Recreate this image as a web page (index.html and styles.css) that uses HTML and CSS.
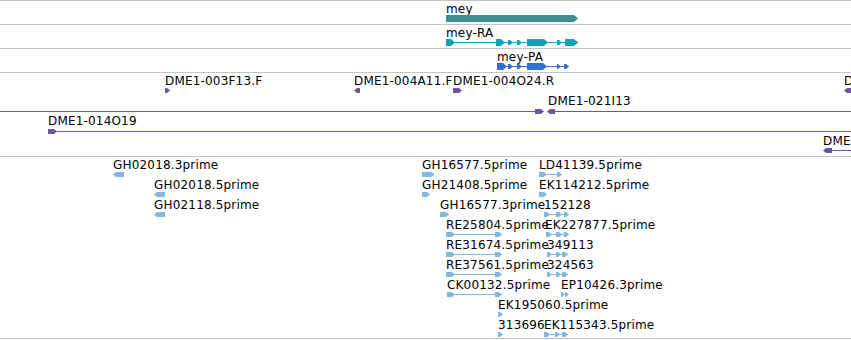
FILE: index.html
```html
<!DOCTYPE html>
<html>
<head>
<meta charset="utf-8">
<link rel="stylesheet" href="styles.css">
</head>
<body>
<div class="browser">
  <div class="track t1">
    <svg class="canvas" width="851" height="23" viewBox="0 1 851 23">
      <text class="lbl" x="446" y="13">mey</text>
      <polygon class="gene" points="446,15 574,15 578,18.5 574,22 446,22"/>
    </svg>
  </div>
  <div class="track t2">
    <svg class="canvas" width="851" height="23" viewBox="0 25 851 23">
      <text class="lbl" x="446" y="37">mey-RA</text>
      <g class="ra">
        <rect x="446" y="42" width="132" height="1"/>
        <polygon points="446,39 451,39 455,42.5 451,46 446,46"/>
        <polygon points="496,39 501,39 505,42.5 501,46 496,46"/>
        <polygon points="508,40 510,40 513,42.5 510,45 508,45"/>
        <polygon points="517,40 519,40 522,42.5 519,45 517,45"/>
        <polygon points="527,39 544,39 548,42.5 544,46 527,46"/>
        <polygon points="557,40 559,40 562,42.5 559,45 557,45"/>
        <polygon points="565,39 574,39 578,42.5 574,46 565,46"/>
      </g>
    </svg>
  </div>
  <div class="track t3">
    <svg class="canvas" width="851" height="23" viewBox="0 49 851 23">
      <text class="lbl" x="497" y="61">mey-PA</text>
      <g class="pa">
        <rect x="497" y="66" width="72" height="1"/>
        <polygon points="497,63 503,63 507,66.5 503,70 497,70"/>
        <polygon points="508,64 510,64 513,66.5 510,69 508,69"/>
        <polygon points="517,64 519,64 522,66.5 519,69 517,69"/>
        <polygon points="527,63 543,63 547,66.5 543,70 527,70"/>
        <polygon points="557,64 558,64 561,66.5 558,69 557,69"/>
        <polygon points="564,64 566,64 569,66.5 566,69 564,69"/>
      </g>
    </svg>
  </div>
  <div class="track t4">
    <svg class="canvas" width="851" height="83" viewBox="0 73 851 83">
      <text class="lbl" x="165" y="85">DME1-003F13.F</text>
      <text class="lbl" x="354" y="85">DME1-004A11.F</text>
      <text class="lbl" x="453" y="85">DME1-004O24.R</text>
      <text class="lbl" x="844" y="85">D</text>
      <text class="lbl" x="548" y="105">DME1-021I13</text>
      <text class="lbl" x="48" y="125">DME1-014O19</text>
      <text class="lbl" x="823" y="145">DME</text>
      <g class="clone">
        <polygon points="165,88 167,88 170,90.5 167,93 165,93"/>
        <polygon points="354,90.5 357,88 360,88 360,93 357,93"/>
        <polygon points="453,88 459,88 462,90.5 459,93 453,93"/>
        <polygon points="844,90.5 847,88 851,88 851,93 847,93"/>

        <rect x="0" y="111" width="535" height="1"/>
        <polygon points="535,109 541,109 544,111.5 541,114 535,114"/>
        <polygon points="547,111.5 550,109 555,109 555,114 550,114"/>
        <rect x="555" y="111" width="296" height="1"/>

        <polygon points="48,129 54,129 57,131.5 54,134 48,134"/>
        <rect x="57" y="131" width="794" height="1"/>

        <polygon points="823,150.5 826,148 832,148 832,153 826,153"/>
        <rect x="832" y="150" width="19" height="1"/>
      </g>
    </svg>
  </div>
  <div class="track t5">
    <svg class="canvas" width="851" height="181" viewBox="0 157 851 181">
      <text class="lbl" x="113" y="169">GH02018.3prime</text>
      <text class="lbl" x="422" y="169">GH16577.5prime</text>
      <text class="lbl" x="539" y="169">LD41139.5prime</text>

      <text class="lbl" x="154" y="189">GH02018.5prime</text>
      <text class="lbl" x="422" y="189">GH21408.5prime</text>
      <text class="lbl" x="539" y="189">EK114212.5prime</text>

      <text class="lbl" x="154" y="209">GH02118.5prime</text>
      <text class="lbl" x="440" y="209">GH16577.3prime</text>
      <text class="lbl" x="544" y="209">152128</text>

      <text class="lbl" x="446" y="229">RE25804.5prime</text>
      <text class="lbl" x="545" y="229">EK227877.5prime</text>

      <text class="lbl" x="446" y="249">RE31674.5prime</text>
      <text class="lbl" x="547" y="249">349113</text>

      <text class="lbl" x="446" y="269">RE37561.5prime</text>
      <text class="lbl" x="547" y="269">324563</text>

      <text class="lbl" x="447" y="289">CK00132.5prime</text>
      <text class="lbl" x="561" y="289">EP10426.3prime</text>

      <text class="lbl" x="498" y="309">EK195060.5prime</text>

      <text class="lbl" x="498" y="329">313696</text>
      <text class="lbl" x="544" y="329">EK115343.5prime</text>

      <g class="est">
        <!-- row 1 -->
        <polygon points="113,174.5 116,172 124,172 124,177 116,177"/>
        <polygon points="422,172 431,172 435,174.5 431,177 422,177"/>
        <polygon points="539,172 544,172 547,174.5 544,177 539,177"/>
        <rect x="547" y="174" width="10" height="1"/>
        <polygon points="557,172 559,172 562,174.5 559,177 557,177"/>
        <!-- row 2 -->
        <polygon points="154,194.5 157,192 165,192 165,197 157,197"/>
        <polygon points="422,192 427,192 430,194.5 427,197 422,197"/>
        <polygon points="539,192 544,192 547,194.5 544,197 539,197"/>
        <!-- row 3 -->
        <polygon points="154,214.5 157,212 165,212 165,217 157,217"/>
        <polygon points="440,212 446,212 449,214.5 446,217 440,217"/>
        <rect x="544" y="214" width="25" height="1"/>
        <polygon points="544,212 547,212 550,214.5 547,217 544,217"/>
        <polygon points="556,212 559,212 562,214.5 559,217 556,217"/>
        <polygon points="564,212 566,212 569,214.5 566,217 564,217"/>
        <!-- row 4 -->
        <rect x="446" y="234" width="56" height="1"/>
        <polygon points="446,232 452,232 455,234.5 452,237 446,237"/>
        <polygon points="495,232 499,232 502,234.5 499,237 495,237"/>
        <rect x="546" y="234" width="23" height="1"/>
        <polygon points="546,232 549,232 552,234.5 549,237 546,237"/>
        <polygon points="556,232 559,232 562,234.5 559,237 556,237"/>
        <polygon points="564,232 566,232 569,234.5 566,237 564,237"/>
        <!-- row 5 -->
        <rect x="446" y="254" width="56" height="1"/>
        <polygon points="446,252 452,252 455,254.5 452,257 446,257"/>
        <polygon points="495,252 499,252 502,254.5 499,257 495,257"/>
        <rect x="547" y="254" width="21" height="1"/>
        <polygon points="547,252 549,252 552,254.5 549,257 547,257"/>
        <polygon points="556,252 558,252 561,254.5 558,257 556,257"/>
        <polygon points="562,252 565,252 568,254.5 565,257 562,257"/>
        <!-- row 6 -->
        <rect x="446" y="274" width="56" height="1"/>
        <polygon points="446,272 452,272 455,274.5 452,277 446,277"/>
        <polygon points="495,272 499,272 502,274.5 499,277 495,277"/>
        <rect x="547" y="274" width="21" height="1"/>
        <polygon points="547,272 549,272 552,274.5 549,277 547,277"/>
        <polygon points="556,272 558,272 561,274.5 558,277 556,277"/>
        <polygon points="562,272 565,272 568,274.5 565,277 562,277"/>
        <!-- row 7 -->
        <rect x="447" y="294" width="55" height="1"/>
        <polygon points="447,292 452,292 455,294.5 452,297 447,297"/>
        <polygon points="495,292 499,292 502,294.5 499,297 495,297"/>
        <polygon points="561,292 562,292 565,294.5 562,297 561,297"/>
        <polygon points="565,292 566,292 569,294.5 566,297 565,297"/>
        <!-- row 8 -->
        <polygon points="498,312 500,312 503,314.5 500,317 498,317"/>
        <!-- row 9 -->
        <polygon points="498,332 500,332 503,334.5 500,337 498,337"/>
        <rect x="544" y="334" width="24" height="1"/>
        <polygon points="544,332 547,332 550,334.5 547,337 544,337"/>
        <polygon points="555,332 557,332 560,334.5 557,337 555,337"/>
        <polygon points="562,332 565,332 568,334.5 565,337 562,337"/>
      </g>
    </svg>
  </div>
</div>
</body>
</html>
```

FILE: styles.css
```css
html, body {
  margin: 0;
  padding: 0;
  background: #ffffff;
}

.browser {
  width: 851px;
  height: 340px;
  overflow: hidden;
  border-top: 1px solid #c4c4c4;
  box-sizing: border-box;
}

.track {
  border-bottom: 1px solid #c4c4c4;
  overflow: hidden;
}

.canvas {
  display: block;
}

.lbl {
  font-family: "DejaVu Sans", sans-serif;
  font-size: 12px;
  letter-spacing: 0.18px;
  fill: #000000;
}

.gene {
  fill: #3f8f8f;
}

.ra {
  fill: #12a0c0;
}

.pa {
  fill: #3271d2;
}

.clone {
  fill: #6e55a5;
}

.est {
  fill: #80b8de;
}
```
